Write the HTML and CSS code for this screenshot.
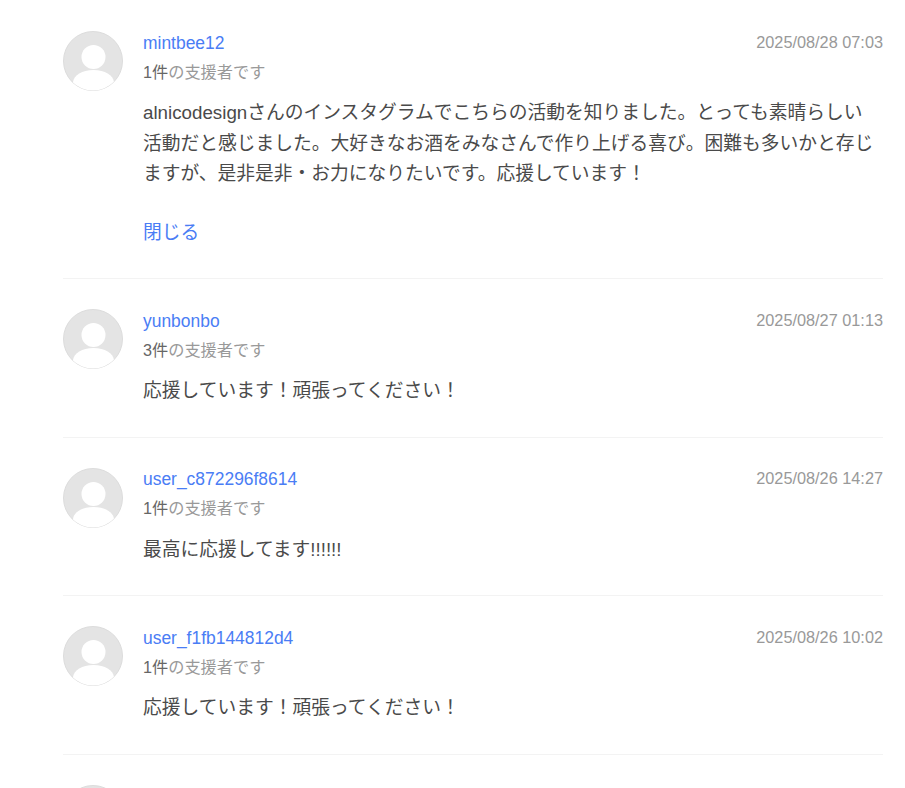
FILE: index.html
```html
<!DOCTYPE html>
<html lang="ja">
<head>
<meta charset="utf-8">
<title>支援者コメント</title>
<link rel="stylesheet" href="styles.css">
</head>
<body>
<svg class="sprite" width="0" height="0" aria-hidden="true"><defs>
<clipPath id="avatar-clip"><circle cx="30" cy="30" r="29.500"/></clipPath>
<symbol id="avatar" viewBox="0 0 60 60">
<circle cx="30" cy="30" r="29.500" fill="#e4e4e4" stroke="#dcdcdc"/>
<circle cx="30.500" cy="26" r="12" fill="#fff"/>
<path d="M10 60V51C11 44 19 39 30.500 39S50 44 51 51V60Z" fill="#fff" clip-path="url(#avatar-clip)"/>
</symbol>
</defs></svg>
<main class="list">
<article class="comment">
<svg class="avatar"><use href="#avatar"/></svg>
<div class="content">
<div class="head"><a class="name">mintbee12</a><time class="date">2025/08/28 07:03</time></div>
<p class="count"><span class="num">1件</span>の支援者です</p>
<p class="text">alnicodesignさんのインスタグラムでこちらの活動を知りました。とっても素晴らしい活動だと感じました。大好きなお酒をみなさんで作り上げる喜び。困難も多いかと存じますが、是非是非・お力になりたいです。応援しています！</p>
<a class="close">閉じる</a>
</div>
</article>
<article class="comment">
<svg class="avatar"><use href="#avatar"/></svg>
<div class="content">
<div class="head"><a class="name">yunbonbo</a><time class="date">2025/08/27 01:13</time></div>
<p class="count"><span class="num">3件</span>の支援者です</p>
<p class="text">応援しています！頑張ってください！</p>
</div>
</article>
<article class="comment">
<svg class="avatar"><use href="#avatar"/></svg>
<div class="content">
<div class="head"><a class="name">user_c872296f8614</a><time class="date">2025/08/26 14:27</time></div>
<p class="count"><span class="num">1件</span>の支援者です</p>
<p class="text">最高に応援してます!!!!!!</p>
</div>
</article>
<article class="comment">
<svg class="avatar"><use href="#avatar"/></svg>
<div class="content">
<div class="head"><a class="name">user_f1fb144812d4</a><time class="date">2025/08/26 10:02</time></div>
<p class="count"><span class="num">1件</span>の支援者です</p>
<p class="text">応援しています！頑張ってください！</p>
</div>
</article>
<article class="comment">
<svg class="avatar"><use href="#avatar"/></svg>
</article>
</main>
</body>
</html>
```

FILE: styles.css
```css
html, body { margin: 0; padding: 0; background: #fff; overflow: hidden; height: 788px; }
body { font-family: "Liberation Sans", "Noto Sans CJK JP", sans-serif; color: #4a4a4a; }
.sprite { position: absolute; }
.list { margin-left: 63px; width: 820px; padding-top: 31px; }
.comment { display: flex; gap: 20px; padding-bottom: 29.85px; margin-bottom: 30px; border-bottom: 1px solid #f3f3f3; }
.avatar { width: 60px; height: 60px; flex: none; }
.content { flex: 1; min-width: 0; }
.head { display: flex; justify-content: space-between; align-items: center; height: 24px; }
.name { font-size: 17.45px; color: #4a7df5; }
.date { font-size: 16.3px; color: #999; position: relative; top: -1px; }
.count { margin: 4.5px 0 0; font-size: 16.2px; line-height: 24px; color: #999; }
.num { color: #666; }
.text { margin: 14.75px 0 0; max-width: 733px; font-size: 18.75px; line-height: 30.5px; color: #4a4a4a; }
.close { display: block; margin-top: 29.5px; font-size: 18.75px; line-height: 28.9px; color: #4a7df5; }
```
